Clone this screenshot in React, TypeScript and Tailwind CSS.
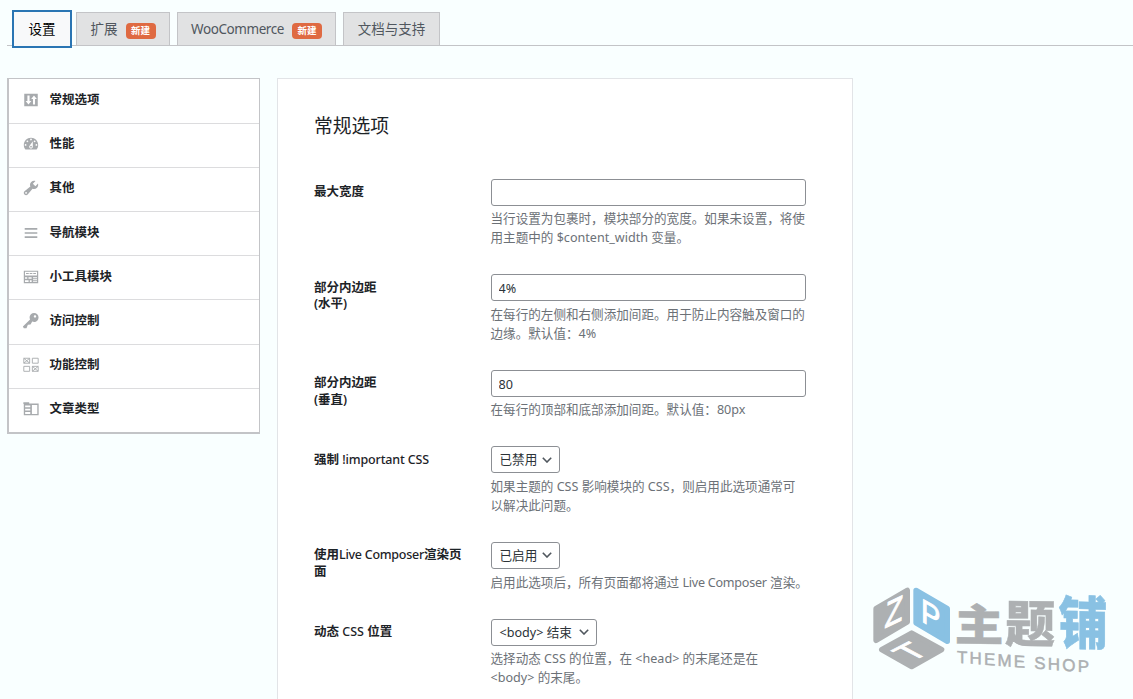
import type { ReactNode } from "react";

const tabs = [
  { label: "扩展", badge: true, width: "w-[94px]" },
  { label: "WooCommerce", badge: true, width: "w-[159px]" },
  { label: "文档与支持", badge: false, width: "w-[97px]" },
];

const icons: Record<string, ReactNode> = {
  settings: (
    <path
      fillRule="evenodd"
      d="M2.5 3h15v14h-15zM6 5v6H4l3.2 4 3.2-4h-2V5zM12.2 15V8.8h-2L13.3 5l3.2 3.8h-2V15z"
    />
  ),
  dashboard: (
    <path
      fillRule="evenodd"
      d="M3.76 16h12.48c1.1-1.37 1.76-3.11 1.76-5 0-4.42-3.58-8-8-8s-8 3.58-8 8c0 1.89.66 3.63 1.76 5zM10 4c.55 0 1 .45 1 1s-.45 1-1 1-1-.45-1-1 .45-1 1-1zM6 6c.55 0 1 .45 1 1s-.45 1-1 1-1-.45-1-1 .45-1 1-1zm8 0c.55 0 1 .45 1 1s-.45 1-1 1-1-.45-1-1 .45-1 1-1zm-5.37 5.55L12 7v6c0 1.1-.9 2-2 2s-2-.9-2-2c0-.57.24-1.08.63-1.45zM4 10c.55 0 1 .45 1 1s-.45 1-1 1-1-.45-1-1 .45-1 1-1zm12 0c.55 0 1 .45 1 1s-.45 1-1 1-1-.45-1-1 .45-1 1-1zm-5 3c0-.55-.45-1-1-1s-1 .45-1 1 .45 1 1 1 1-.45 1-1z"
    />
  ),
  wrench: (
    <path d="M16.68 9.77c-1.34 1.34-3.3 1.67-4.95.99l-5.41 6.52c-.99.99-2.59.99-3.58 0s-.99-2.59 0-3.57l6.52-5.42c-.68-1.65-.35-3.61.99-4.95 1.28-1.28 3.12-1.62 4.72-1.06l-2.89 2.89 2.82 2.82 2.86-2.87c.53 1.58.18 3.39-1.08 4.65zM3.81 16.21c.4.39 1.04.39 1.43 0 .4-.4.4-1.04 0-1.43-.39-.4-1.03-.4-1.43 0-.39.39-.39 1.03 0 1.43z" />
  ),
  menu: <path d="M3 4.5h14v1.8H3zM3 9.1h14v1.8H3zM3 13.7h14v1.8H3z" />,
  widgets: (
    <path
      fillRule="evenodd"
      d="M2 3h16v14H2zM3.3 4.3v3.9h13.4V4.3zM4.5 5.6h3v1.2h-3zM8.5 5.6h3v1.2h-3zM12.5 5.6h3v1.2h-3zM3.3 10.2v1.8h2.5v-1.8zM7.2 10.2v1.8h3.5v-1.8zM3.3 13.6v2h4v-2zM8.7 13.6v2h2v-2zM12.3 10.2v1.2h4.4v-1.2zM12.3 12.5v1h4.4v-1zM12.3 14.6v1h4.4v-1z"
    />
  ),
  key: (
    <path d="M16.95 2.58c1.96 1.95 1.96 5.12 0 7.07-1.51 1.51-3.75 1.84-5.59 1.01l-1.87 3.31-2.99.31L5 18H2l-1-2 7.95-7.69c-.92-1.87-.62-4.18.93-5.73 1.95-1.96 5.12-1.96 7.07 0zm-2.51 3.79c.74 0 1.33-.6 1.33-1.34 0-.73-.59-1.33-1.33-1.33-.73 0-1.33.6-1.33 1.33 0 .74.6 1.34 1.33 1.34z" />
  ),
  features: (
    <path
      fill="none"
      stroke="currentColor"
      d="M2 2.5h6.5v5.5H2zM11.5 2.5h6.5v5.5h-6.5zM2 11.5h6.5v5.5H2zM11.5 11.5h6.5v5.5h-6.5zM2 2.5l6.5 5.5M8.5 2.5L2 8M11.5 11.5l6.5 5.5M18 11.5l-6.5 5.5"
    />
  ),
  posts: (
    <path
      fillRule="evenodd"
      d="M1.5 2.5H8V4h10.5v13H2V4.5h-.5zM3.5 6.2v1.9h5.7V6.2zM3.5 9.7v2h5.7v-2zM3.5 13.3v2.2h5.7v-2.2zM11 5.6v9.9h6V5.6z"
    />
  ),
};

const menu = [
  { label: "常规选项", icon: "settings" },
  { label: "性能", icon: "dashboard" },
  { label: "其他", icon: "wrench" },
  { label: "导航模块", icon: "menu" },
  { label: "小工具模块", icon: "widgets" },
  { label: "访问控制", icon: "key" },
  { label: "功能控制", icon: "features" },
  { label: "文章类型", icon: "posts" },
];

const Field = ({ label, help, children }: { label: ReactNode; help: ReactNode; children: ReactNode }) => (
  <div className="flex pb-[27.05px]">
    <div className="w-[176.5px] shrink-0 pt-[5.5px] text-[12.5px] font-semibold leading-[16.5px] text-[#1d2327]">
      {label}
    </div>
    <div className="w-[330px]">
      {children}
      <p className="mt-[3.45px] whitespace-nowrap text-[12.58px] leading-[19px] text-[#6c7177]">{help}</p>
    </div>
  </div>
);

const TextInput = ({ value }: { value: string }) => (
  <input
    type="text"
    defaultValue={value}
    className="block h-[27px] w-[315px] rounded-[3px] border border-[#8c8f94] bg-white px-[7px] pt-0.5 text-[12.6px] text-[#2c3338]"
  />
);

const SelectBox = ({ value, width }: { value: string; width: string }) => (
  <button
    className={`flex h-[27.3px] items-center justify-between rounded-[3px] border border-[#8c8f94] bg-white pl-2 pr-[7px] pt-0.5 text-[12.6px] text-[#2c3338] ${width}`}
  >
    <span className="whitespace-nowrap">{value}</span>
    <svg className="mb-0.5" width="10" height="6" viewBox="0 0 10 6" fill="none" stroke="#50575e" strokeWidth="1.6">
      <path d="M0.8 0.8L5 5l4.2-4.2" />
    </svg>
  </button>
);

const Logo = () => (
  <svg
    className="absolute left-[860px] top-[575px] font-['Liberation_Sans','Noto_Sans_CJK_SC',sans-serif]"
    width="260"
    height="110"
    viewBox="0 0 780 330"
  >
    <g strokeWidth="16" strokeLinejoin="round">
      <path d="M142 46v95L48 196v-95z" fill="#adb0b2" stroke="#adb0b2" />
      <path d="M168 46l94 55v98l-94-55z" fill="#89c1e3" stroke="#89c1e3" />
      <path d="M155 174l90 50-90 51-90-51z" fill="#adb0b2" stroke="#adb0b2" />
    </g>
    <g fill="#fff" stroke="#fff" strokeWidth="3" textAnchor="middle" fontSize="100">
      <text transform="matrix(0.87 -0.42 -0.08 1.1 99 148)">Z</text>
      <text transform="matrix(0.87 0.5 0 1 212 155)">P</text>
      <text transform="matrix(0.95 -0.48 0.92 0.48 183 246)">T</text>
    </g>
    <g
      fontWeight="900"
      textAnchor="middle"
      fontSize="146"
      strokeWidth="1.5"
      className="font-['Noto_Sans_CJK_SC',sans-serif]"
    >
      <text fill="#adb0b2" stroke="#adb0b2" transform="matrix(1 0.01 0 0.9 357 198)">主</text>
      <text fill="#adb0b2" stroke="#adb0b2" transform="matrix(1.03 0.01 0 1.03 510 202)">题</text>
      <text fill="#89c1e3" stroke="#89c1e3" transform="matrix(1.01 0.03 0 1.17 669 207)">铺</text>
    </g>
    <text fill="#adb0b2" stroke="#adb0b2" strokeWidth="1.4" fontSize="51" textLength="396" transform="matrix(1 0.075 0 1 291 263)">
      THEME SHOP
    </text>
  </svg>
);

export default function App() {
  return (
    <div className="relative h-[699px] w-[1133px] overflow-hidden bg-[#f9ffff] font-['Noto_Sans','Noto_Sans_CJK_SC',sans-serif]">
      <nav className="ml-[7px] flex h-[46px] items-end border-b border-[#c3c4c7] pl-[5px] text-[13.5px] text-[#50575e]">
        <button className="relative -mb-[3px] mr-1 h-[38px] w-[60px] border-2 border-[#2a75b3] bg-[#f8f9fa] text-black">
          设置
        </button>
        {tabs.map((tab) => (
          <button
            key={tab.label}
            className={`mr-[7px] flex h-[33px] items-center justify-center border border-b-0 border-[#c3c4c7] bg-[#e1e2e3] pt-px ${tab.width}`}
          >
            <span className={tab.label === "WooCommerce" ? "tracking-[-0.42px]" : ""}>{tab.label}</span>
            {tab.badge && (
              <span className="ml-2 mt-0.5 flex h-4 w-[30px] items-center justify-center rounded bg-[#df6a42] pt-px text-[9.5px] font-bold text-white">
                新建
              </span>
            )}
          </button>
        ))}
      </nav>

      <div className="flex items-start gap-[17px] pl-[7px] pt-8">
        <aside className="w-[253px] border border-b-2 border-l-2 border-[#c3c4c7] bg-white pt-[0.4px]">
          {menu.map((item) => (
            <a
              key={item.label}
              className="flex h-[44.2px] items-center border-b border-[#dcdcde] pl-[13.4px] text-[12.5px] font-semibold text-[#1d2327] last:h-[43.2px] last:border-b-0"
            >
              <svg
                className="mb-[2px] mr-[9px] text-[#a7aaad]"
                width="18"
                height="18"
                viewBox="0 0 20 20"
                fill="currentColor"
              >
                {icons[item.icon]}
              </svg>
              <span className="mb-px">{item.label}</span>
            </a>
          ))}
        </aside>

        <main className="h-[640px] w-[576px] border border-[#e2e4e7] bg-white pl-9 pt-[34px]">
          <h2 className="mb-[38.6px] text-[18.8px] leading-[27px] text-[#1d2327]">常规选项</h2>
          <Field
            label="最大宽度"
            help={
              <>
                当行设置为包裹时，模块部分的宽度。如果未设置，将使
                <br />
                用主题中的 $content_width 变量。
              </>
            }
          >
            <TextInput value="" />
          </Field>
          <Field
            label={
              <>
                部分内边距
                <br />
                (水平)
              </>
            }
            help={
              <>
                在每行的左侧和右侧添加间距。用于防止内容触及窗口的
                <br />
                边缘。默认值：4%
              </>
            }
          >
            <TextInput value="4%" />
          </Field>
          <Field
            label={
              <>
                部分内边距
                <br />
                (垂直)
              </>
            }
            help="在每行的顶部和底部添加间距。默认值：80px"
          >
            <TextInput value="80" />
          </Field>
          <Field
            label={
              <>
                强制 <span className="font-medium tracking-[-0.15px]">!important CSS</span>
              </>
            }
            help={
              <>
                如果主题的 CSS 影响模块的 CSS，则启用此选项通常可
                <br />
                以解决此问题。
              </>
            }
          >
            <SelectBox value="已禁用" width="w-[69px]" />
          </Field>
          <Field
            label={
              <>
                使用<span className="font-medium tracking-[-0.27px]">Live Composer</span>渲染页
                <br />面
              </>
            }
            help={
              <>
                启用此选项后，所有页面都将通过 <span className="tracking-[-0.25px]">Live Composer</span> 渲染。
              </>
            }
          >
            <SelectBox value="已启用" width="w-[69px]" />
          </Field>
          <Field
            label={
              <>
                动态 <span className="font-medium">CSS</span> 位置
              </>
            }
            help={
              <>
                选择动态 CSS 的位置，在 &lt;head&gt; 的末尾还是在
                <br />
                &lt;body&gt; 的末尾。
              </>
            }
          >
            <SelectBox value="<body> 结束" width="w-[106px]" />
          </Field>
        </main>
      </div>

      <Logo />
    </div>
  );
}
